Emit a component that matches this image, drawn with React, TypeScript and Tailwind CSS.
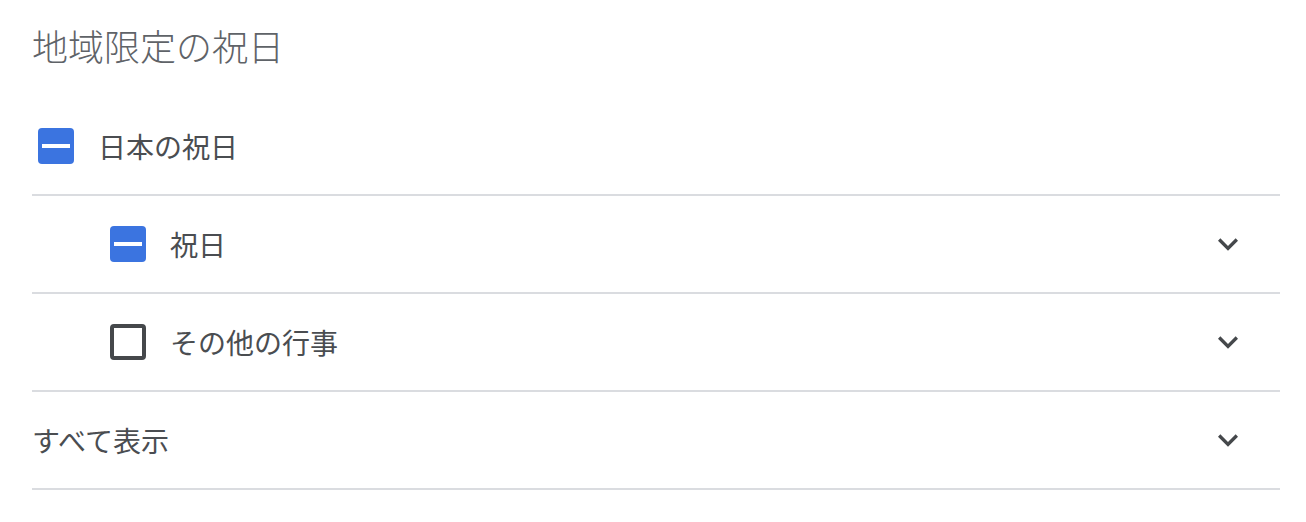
import React from "react";

const FONT = { fontFamily: '"Noto Sans CJK JP", "Noto Sans", sans-serif' };

function ExpandIcon() {
    return (
        <svg viewBox="0 0 24 24" className="w-10 h-10 fill-[#45484b]">
            <path d="M16.59 8.59L12 13.17 7.41 8.59 6 10l6 6 6-6z" />
        </svg>
    );
}

function CheckBox({ state }: { state: "mixed" | "off" }) {
    if (state === "mixed") {
        return (
            <div className="w-9 h-9 rounded-[4px] bg-[#3b74e0] flex items-center justify-center shrink-0">
                <div className="w-7 h-1 bg-white" />
            </div>
        );
    }
    return <div className="w-9 h-9 rounded-[4px] border-4 border-[#45484b] bg-white shrink-0" />;
}

interface RowProps {
    label: string;
    check?: "mixed" | "off";
    indent?: boolean;
    expand?: boolean;
}

function Row({ label, check, indent, expand }: RowProps) {
    return (
        <div className="h-[98px] border-b-2 border-[#dadce0] flex items-center">
            {check && (
                <div className={indent ? "ml-[78px]" : "ml-[6px]"}>
                    <CheckBox state={check} />
                </div>
            )}
            <span
                className={`text-[28px] leading-9 text-[#4a4d51] ${check ? "ml-[24px]" : "ml-0"}`}
            >
                {label}
            </span>
            {expand && (
                <div className="ml-auto mr-8">
                    <ExpandIcon />
                </div>
            )}
        </div>
    );
}

export default function App() {
    return (
        <div className="w-full bg-white pl-8 pr-[26px] pb-8" style={FONT}>
            <div className="h-[98px] pt-[21px]">
                <h2 className="text-[36px] leading-[48px] font-light text-[#5f6368]">地域限定の祝日</h2>
            </div>
            <Row label="日本の祝日" check="mixed" />
            <Row label="祝日" check="mixed" indent expand />
            <Row label="その他の行事" check="off" indent expand />
            <Row label="すべて表示" expand />
        </div>
    );
}
